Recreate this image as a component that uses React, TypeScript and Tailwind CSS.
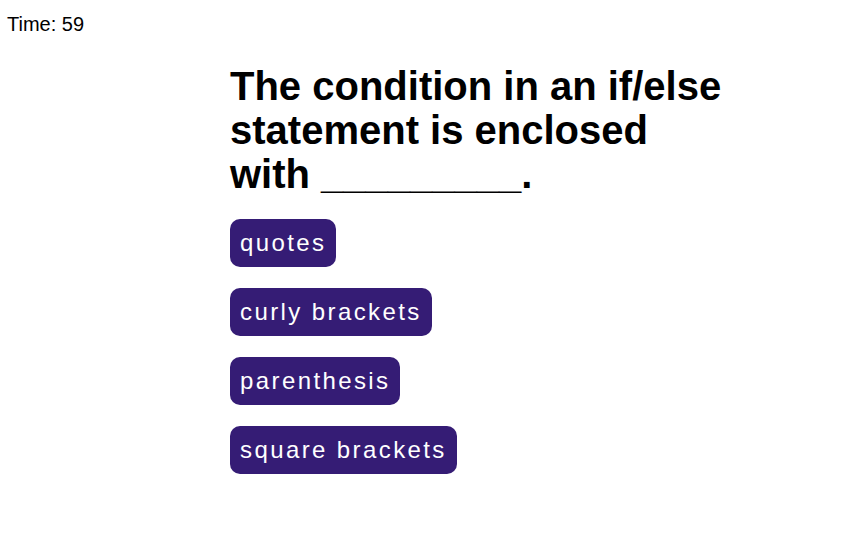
const answers = ["quotes", "curly brackets", "parenthesis", "square brackets"];

export default function App() {
  return (
    <div className="min-h-screen bg-white font-['Liberation_Sans',Arial,sans-serif] text-black">
      <div className="pl-[7px] pt-[13px] text-[20px] leading-[23px]">Time: 59</div>

      <div className="ml-[230px] mt-[28px] w-[500px]">
        <h1 className="text-[40px] font-bold leading-[44px]">
          The condition in an if/else statement is enclosed with _________.
        </h1>

        <div className="mt-[23px] flex flex-col items-start gap-[21px]">
          {answers.map((a) => (
            <button
              key={a}
              className="rounded-[10px] bg-[#351c75] px-[10px] py-[10px] text-[24px] leading-[28px] tracking-[2.4px] text-white"
            >
              {a}
            </button>
          ))}
        </div>
      </div>
    </div>
  );
}
